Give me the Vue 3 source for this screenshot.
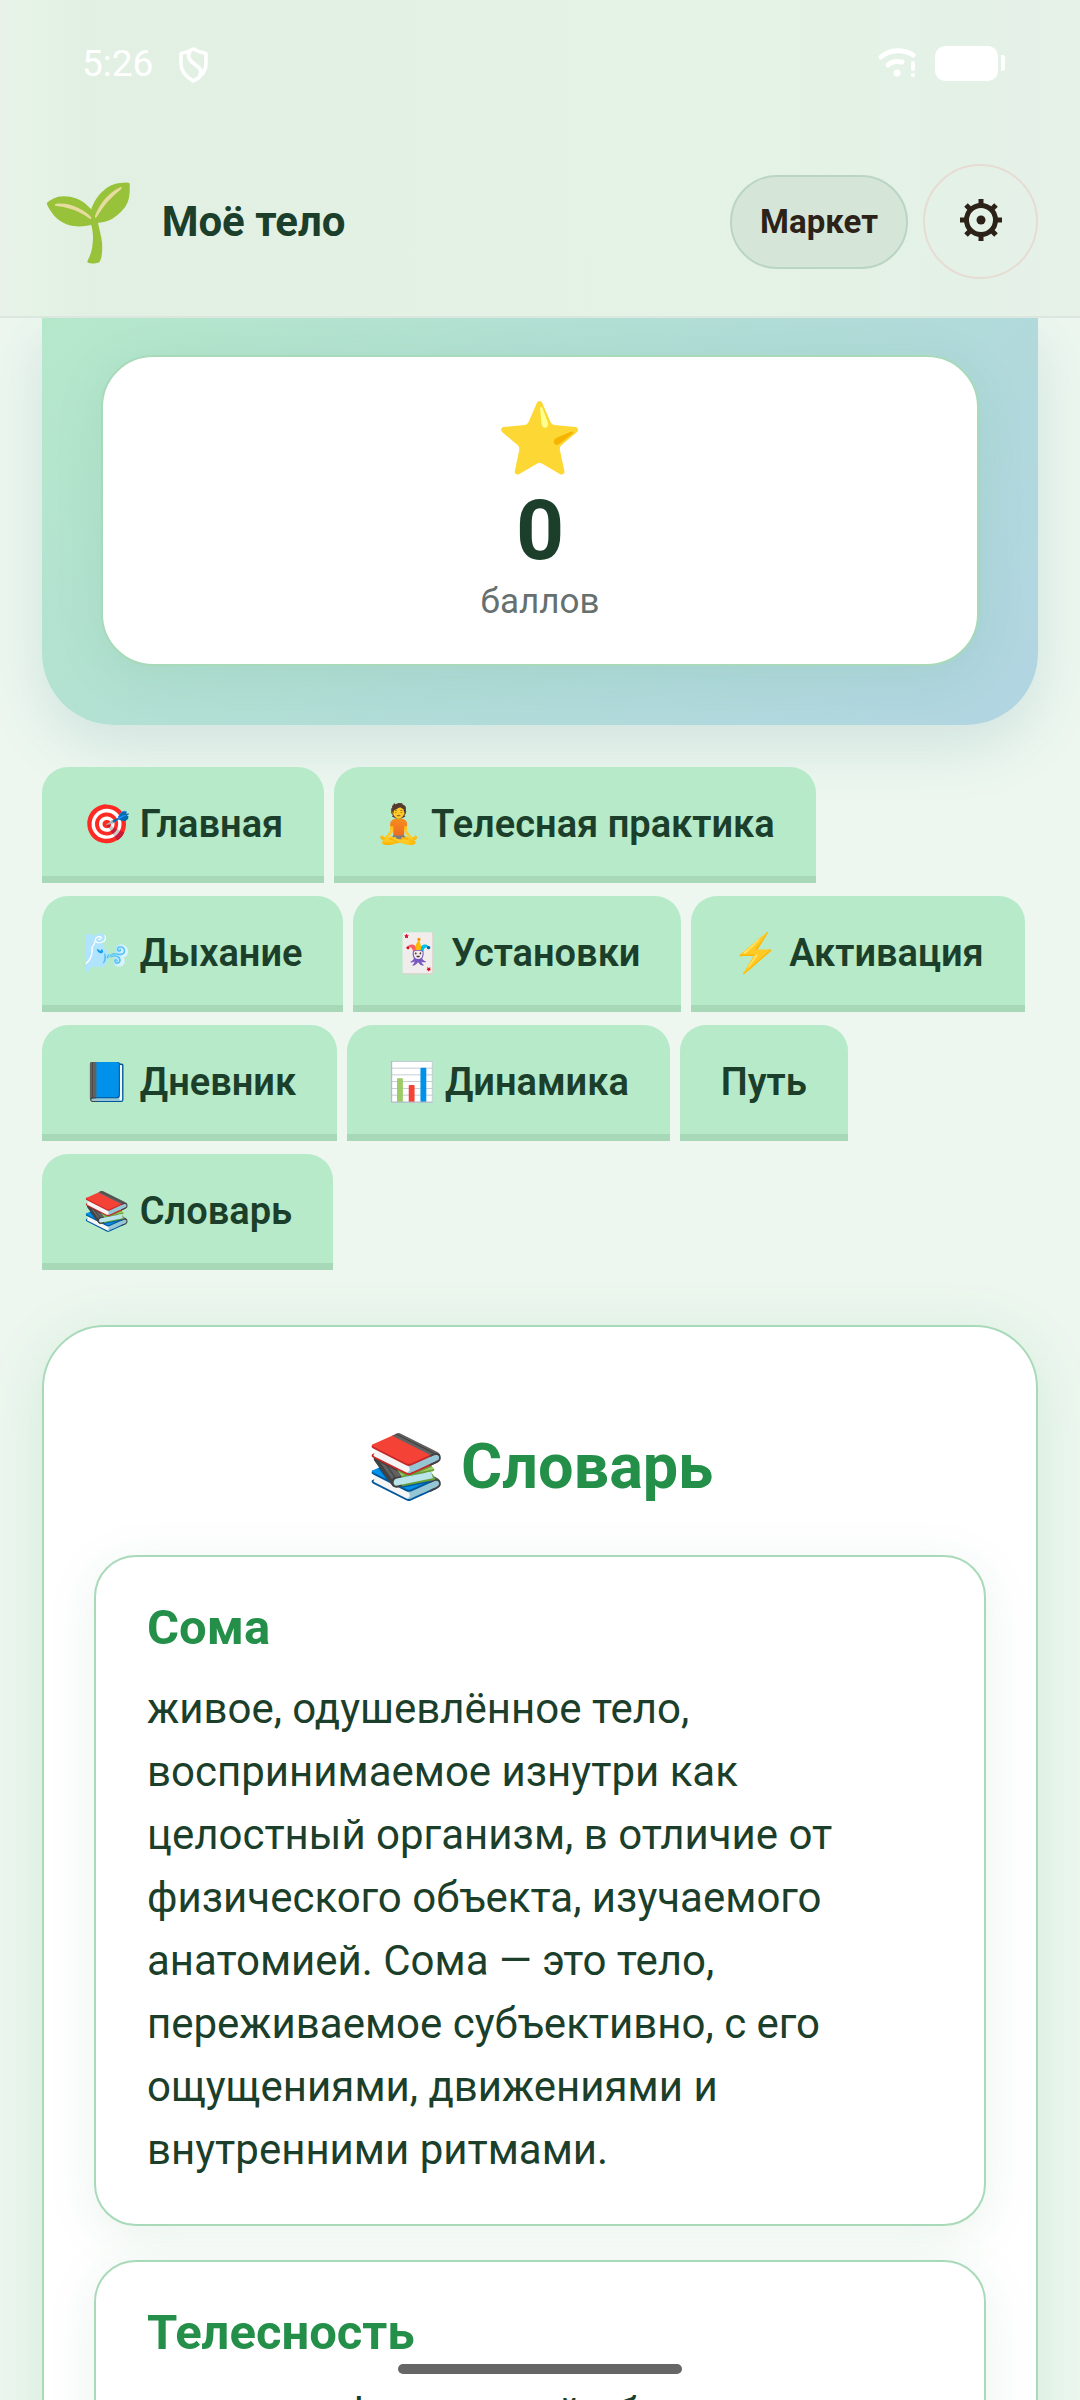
<template>
  <div class="app">
    <header class="header">
      <div class="status-bar">
        <div class="status-left">
          <span class="time">5:26</span>
          <svg class="shield" viewBox="0 0 29 36" fill="none" stroke="#fff" stroke-width="3.6" stroke-linejoin="round" stroke-linecap="round">
            <path d="M14.5 2 C18 4 22 5.5 27 6.5 V17 C27 24 22 30 14.5 34 C7 30 2 24 2 17 V6.5 C7 5.5 11 4 14.5 2 Z" />
            <path d="M10.5 5 C8 11 11 14 16 17.500 C22 21.500 23 24 20.500 29" />
          </svg>
        </div>
        <div class="status-right">
          <svg class="wifi" viewBox="0 0 40 32" fill="none" stroke="#fff" stroke-width="5" stroke-linecap="round">
            <path d="M4 10 C13 2 27 2 36 8" />
            <path d="M11 18 C15 14 20 14 25 15" />
            <circle cx="20" cy="26" r="3.5" fill="#fff" stroke="none" />
            <path d="M36 16 V22" stroke-width="4" />
            <circle cx="36" cy="28" r="2" fill="#fff" stroke="none" />
          </svg>
          <span class="battery"></span>
          <span class="battery-tip"></span>
        </div>
      </div>
      <div class="nav-bar">
        <div class="brand">
          <span class="logo">🌱</span>
          <span class="brand-name">Моё тело</span>
        </div>
        <div class="actions">
          <button class="market" type="button">Маркет</button>
          <button class="settings" type="button" aria-label="Настройки">
            <svg viewBox="0 0 42 42" fill="none" stroke="#2c2218">
              <circle cx="21" cy="21" r="14.5" stroke-width="5" />
              <circle cx="21" cy="21" r="4.5" fill="#2c2218" stroke="none" />
              <path d="M21 0V6M21 36V42M0 21H6M36 21H42" stroke-width="5" />
              <path d="M6 6L10 10M36 6L32 10M6 36L10 32M36 36L32 32" stroke-width="5" />
            </svg>
          </button>
        </div>
      </div>
    </header>

    <main class="content">
      <section class="hero">
        <div class="score">
          <span class="score-icon">⭐</span>
          <span class="score-value">{{ points }}</span>
          <span class="score-label">баллов</span>
        </div>
      </section>

      <nav class="tabs">
        <button v-for="tab in tabs" :key="tab" class="tab" type="button">{{ tab }}</button>
      </nav>

      <section class="panel">
        <h2 class="panel-title">📚 Словарь</h2>
        <article v-for="item in terms" :key="item.name" class="term">
          <h3 class="term-name">{{ item.name }}</h3>
          <p class="term-text">{{ item.text }}</p>
        </article>
      </section>
    </main>

    <div class="home-indicator"></div>
  </div>
</template>

<script setup>
import { ref } from "vue";

const points = ref(0);

const tabs = [
  "🎯 Главная",
  "🧘 Телесная практика",
  "🌬️ Дыхание",
  "🃏 Установки",
  "⚡ Активация",
  "📘 Дневник",
  "📊 Динамика",
  "Путь",
  "📚 Словарь",
];

const terms = [
  {
    name: "Сома",
    text: "живое, одушевлённое тело, воспринимаемое изнутри как целостный организм, в отличие от физического объекта, изучаемого анатомией. Сома — это тело, переживаемое субъективно, с его ощущениями, движениями и внутренними ритмами.",
  },
  {
    name: "Телесность",
    text: "единство физической оболочки",
  },
];
</script>

<style>
body {
  background: #edf7ef;
}
</style>

<style scoped>
.app {
  height: 100vh;
  display: flex;
  flex-direction: column;
  overflow: hidden;
  background: #edf7ef;
  color: #1b3f2a;
  font-family: Roboto, "Noto Color Emoji", sans-serif;
}

.app * {
  box-sizing: border-box;
}

button {
  font-family: inherit;
  margin: 0;
}

.header {
  flex-shrink: 0;
  position: relative;
  z-index: 1;
  background: linear-gradient(90deg, #e8f1e9 0, #e4f3e5 42px, #e2f0e4 84px, #e4f3e5 720px, #e4f1e7 960px, #e6f1e8 100%);
  border-bottom: 2px solid #dbe6df;
}

.status-bar {
  display: flex;
  justify-content: space-between;
  align-items: center;
  height: 126px;
  padding: 0 75px 0 82px;
}

.status-left,
.status-right {
  display: flex;
  align-items: center;
}

.time {
  color: #fff;
  font-size: 37px;
}

.shield {
  width: 29px;
  height: 36px;
  margin: 4px 0 0 26px;
}

.wifi {
  width: 40px;
  height: 32px;
  margin-right: 18px;
}

.battery {
  width: 63px;
  height: 35px;
  border-radius: 10px;
  background: #fff;
}

.battery-tip {
  width: 4px;
  height: 16px;
  margin-left: 3px;
  border-radius: 0 3px 3px 0;
  background: #fff;
}

.nav-bar {
  display: flex;
  justify-content: space-between;
  align-items: center;
  padding: 38px 42px 37px;
}

.brand,
.actions {
  display: flex;
  align-items: center;
}

.logo {
  font-size: 76px;
  line-height: 84px;
}

.brand-name {
  margin-left: 25px;
  font-size: 42px;
  font-weight: 700;
}

.actions {
  gap: 15px;
}

.market {
  height: 94px;
  padding: 0 28px;
  border: 2px solid #bad4c5;
  border-radius: 47px;
  background: #d5e6d9;
  color: #2c2218;
  font-size: 33px;
  font-weight: 700;
}

.settings {
  display: flex;
  align-items: center;
  justify-content: center;
  width: 115px;
  height: 115px;
  padding: 0 0 4px;
  border: 2px solid #e6dcd4;
  border-radius: 50%;
  background: transparent;
}

.settings svg {
  width: 42px;
  height: 42px;
}

.content {
  flex: 1;
  min-height: 0;
  overflow: hidden;
  padding: 0 42px;
}

.hero {
  padding: 37px 59px 59px;
  border-radius: 0 0 72px 72px;
  background: linear-gradient(135deg, #b5e8cb 0%, #b1dcd8 55%, #b1d5e2 100%);
  box-shadow: 0 20px 60px rgba(58, 125, 145, 0.16);
}

.score {
  display: flex;
  flex-direction: column;
  align-items: center;
  padding: 36px 0 37px;
  border: 2px solid #a8dab9;
  border-radius: 52px;
  background: #fff;
  box-shadow: 0 10px 50px rgba(40, 140, 80, 0.1);
}

.score-icon {
  font-size: 70px;
  line-height: 92px;
}

.score-value {
  font-size: 84px;
  font-weight: 700;
  line-height: 92px;
}

.score-label {
  color: #65706f;
  font-size: 35px;
  line-height: 50px;
}

.tabs {
  display: flex;
  flex-wrap: wrap;
  gap: 13px 10px;
  margin-top: 42px;
}

.tab {
  height: 116px;
  padding: 4px 41px 0;
  border: none;
  border-bottom: 7px solid #a7d9b8;
  border-radius: 26px 26px 0 0;
  background: #b6eac9;
  color: #1b3f2a;
  font-size: 38px;
  font-weight: 600;
  white-space: nowrap;
}

.panel {
  margin-top: 55px;
  padding: 88px 50px;
  border: 2px solid #a8dab9;
  border-radius: 63px;
  background: #fff;
  box-shadow: 0 10px 60px rgba(40, 150, 90, 0.12);
}

.panel-title {
  margin: 0 0 36px;
  color: #248f49;
  font-size: 63px;
  font-weight: 700;
  line-height: 104px;
  text-align: center;
}

.term {
  margin-bottom: 34px;
  padding: 42px 51px 43px;
  border: 2px solid #a8dab9;
  border-radius: 42px;
  background: #fff;
  box-shadow: 0 10px 50px rgba(40, 140, 80, 0.1);
}

.term-name {
  margin: 0 0 20px;
  color: #248f49;
  font-size: 49px;
  font-weight: 700;
  line-height: 58px;
}

.term-text {
  margin: 0;
  font-size: 42px;
  line-height: 63px;
}

.home-indicator {
  position: fixed;
  bottom: 26px;
  left: 50%;
  width: 284px;
  height: 10px;
  margin-left: -142px;
  border-radius: 5px;
  background: #666;
}
</style>
